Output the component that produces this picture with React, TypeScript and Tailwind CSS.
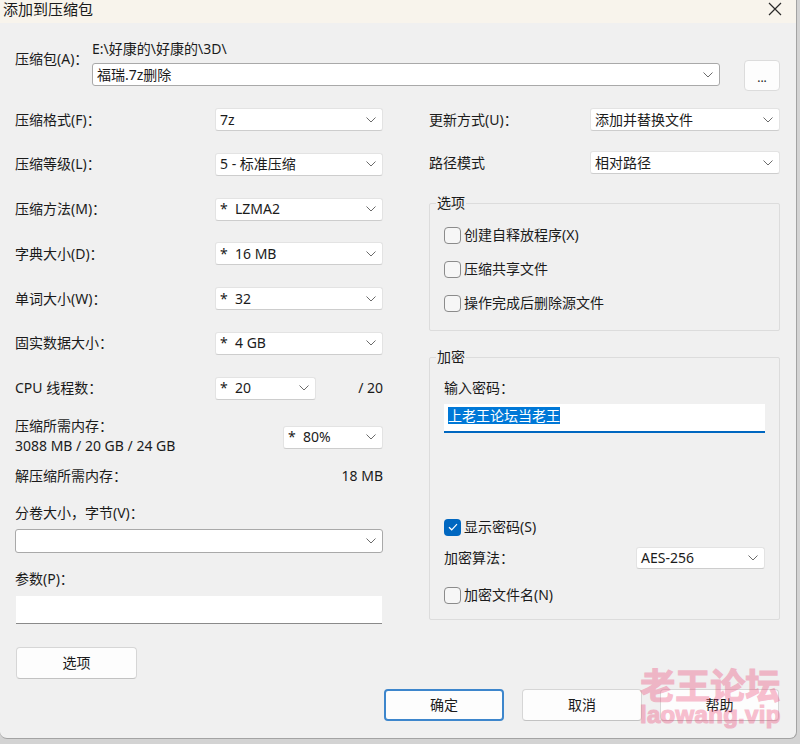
import * as React from 'react';

const FONT = '"Noto Sans", "Noto Sans CJK SC", sans-serif';

function Chevron() {
  return (
    <svg width="10" height="6" viewBox="0 0 10 6" className="mr-[6px] shrink-0">
      <polyline points="0.5,0.5 5,5 9.5,0.5" fill="none" stroke="#6b6b6b" strokeWidth="1" />
    </svg>
  );
}

function Combo({
  value,
  className = '',
  editable = false,
}: {
  value: string;
  className?: string;
  editable?: boolean;
}) {
  return (
    <div
      className={`flex items-center justify-between bg-white rounded-[3px] pl-[4px] text-[14px] leading-[20px] ${
        editable
          ? 'border border-[#a9a9a9]'
          : 'border border-[#e3e3e3] border-b-[#cdcdcd]'
      } ${className}`}
    >
      <span className="whitespace-pre">{value}</span>
      <Chevron />
    </div>
  );
}

function Check({ label, checked = false }: { label: string; checked?: boolean }) {
  return (
    <div className="flex items-center h-[20px]">
      {checked ? (
        <span className="w-[17px] h-[17px] rounded-[4px] bg-[#0067c0] flex items-center justify-center">
          <svg width="10" height="8" viewBox="0 0 10 8">
            <polyline points="1,4.2 3.7,6.8 9,1.2" fill="none" stroke="#fff" strokeWidth="1.2" />
          </svg>
        </span>
      ) : (
        <span className="w-[17px] h-[17px] rounded-[4px] border border-[#8b8b8b] bg-[#f6f6f6]" />
      )}
      <span className="ml-[3px] text-[14px]">{label}</span>
    </div>
  );
}

function Button({ label, primary = false, className = '' }: { label: string; primary?: boolean; className?: string }) {
  return (
    <button
      className={`h-[32px] rounded-[4px] bg-[#fdfdfd] text-[14px] text-[#1b1b1b] ${
        primary ? 'border-2 border-[#3d86cc]' : 'border border-[#d6d6d6] border-b-[#c2c2c2]'
      } ${className}`}
    >
      {label}
    </button>
  );
}

function Row({ label, children }: { label: string; children: React.ReactNode }) {
  return (
    <div className="flex items-center justify-between h-[23px]">
      <span className="text-[14px]">{label}</span>
      {children}
    </div>
  );
}

export default function App() {
  return (
    <div className="w-[800px] h-[744px] bg-[#d3d3d3] overflow-hidden" style={{ fontFamily: FONT }}>
      <div className="relative w-[797px] h-[739px] bg-[#f0f0f0] rounded-b-[7px] border-r border-b border-[#a3a3a3] text-[#1b1b1b]">
        {/* title bar */}
        <div className="h-[23px] bg-[#f8f4ec] flex items-center justify-between pl-[3px] pr-[14px]">
          <span className="text-[15px] leading-[18px] -mt-[5px]">添加到压缩包</span>
          <svg width="14" height="14" viewBox="0 0 14 14" className="-mt-[5px]">
            <path d="M1 1 L13 13 M13 1 L1 13" stroke="#2a2a2a" strokeWidth="1.2" />
          </svg>
        </div>

        {/* archive row */}
        <div className="flex pl-[15px] mt-[16px] text-[14px] leading-[20px]">
          <span className="w-[77px] mt-[10px]">压缩包(A)：</span>
          <div className="w-[628px] flex flex-col">
            <span>E:\好康的\好康的\3D\</span>
            <Combo value="福瑞.7z删除" editable className="mt-[4px] h-[23px]" />
          </div>
          <button className="ml-[24px] mt-[21px] w-[36px] h-[31px] rounded-[4px] bg-[#fdfdfd] border border-[#dcdcdc] text-[12px] leading-[20px] pt-[4px]">
            ...
          </button>
        </div>

        {/* two columns */}
        <div className="grid grid-cols-[368px_351px] gap-x-[46px] pl-[15px] mt-[17px] text-[14px] leading-[20px]">
          {/* left column */}
          <div className="flex flex-col">
            <div className="flex flex-col gap-[21.8px]">
              <Row label="压缩格式(F)：">
                <Combo value="7z" className="w-[168px] h-[23px]" />
              </Row>
              <Row label="压缩等级(L)：">
                <Combo value="5 - 标准压缩" className="w-[168px] h-[23px]" />
              </Row>
              <Row label="压缩方法(M)：">
                <Combo value="*  LZMA2" className="w-[168px] h-[23px]" />
              </Row>
              <Row label="字典大小(D)：">
                <Combo value="*  16 MB" className="w-[168px] h-[23px]" />
              </Row>
              <Row label="单词大小(W)：">
                <Combo value="*  32" className="w-[168px] h-[23px]" />
              </Row>
              <Row label="固实数据大小：">
                <Combo value="*  4 GB" className="w-[168px] h-[23px]" />
              </Row>
              <div className="flex items-center h-[23px]">
                <span className="w-[200px]">CPU 线程数：</span>
                <Combo value="*  20" className="w-[101px] h-[23px]" />
                <span className="ml-auto">/ 20</span>
              </div>
            </div>

            <div className="flex justify-between mt-[16px]">
              <div className="flex flex-col">
                <span>压缩所需内存：</span>
                <span>3088 MB / 20 GB / 24 GB</span>
              </div>
              <Combo value="*  80%" className="w-[100px] h-[23px] mt-[10px]" />
            </div>

            <div className="flex justify-between mt-[10px]">
              <span>解压缩所需内存：</span>
              <span>18 MB</span>
            </div>

            <span className="mt-[17px]">分卷大小，字节(V)：</span>
            <Combo value="" editable className="mt-[6px] h-[24px]" />

            <span className="mt-[16px]">参数(P)：</span>
            <div className="mt-[7px] ml-px w-[366px] h-[28px] bg-white border-b border-[#8a8a8a]" />

            <Button label="选项" className="mt-[23px] ml-px w-[121px]" />
          </div>

          {/* right column */}
          <div className="flex flex-col">
            <Row label="更新方式(U)：">
              <Combo value="添加并替换文件" className="w-[190px] h-[23px]" />
            </Row>
            <div className="mt-[20px]">
              <Row label="路径模式">
                <Combo value="相对路径" className="w-[190px] h-[23px]" />
              </Row>
            </div>

            <fieldset className="mt-[19px] border border-[#dcdcdc] rounded-[2px] pl-[14px] pr-[14px] pt-[12px] pb-[17px] flex flex-col gap-[14px]">
              <legend className="-ml-[8px] px-px leading-[20px]">选项</legend>
              <Check label="创建自释放程序(X)" />
              <Check label="压缩共享文件" />
              <Check label="操作完成后删除源文件" />
            </fieldset>

            <fieldset className="mt-[16px] border border-[#dcdcdc] rounded-[2px] pl-[14px] pr-[14px] pt-[11px] pb-[14px] flex flex-col">
              <legend className="-ml-[8px] px-px leading-[20px]">加密</legend>
              <span>输入密码：</span>
              <div className="mt-[6px] h-[29px] bg-white border-b-2 border-[#0067c0] pl-[4px] pt-[2px]">
                <span className="bg-[#0078d7] text-white leading-[17px] inline-block">上老王论坛当老王</span>
              </div>
              <div className="mt-[84px]">
                <Check label="显示密码(S)" checked />
              </div>
              <div className="flex items-center justify-between h-[22px] mt-[10px]">
                <span>加密算法：</span>
                <Combo value="AES-256" className="w-[129px] h-[22px]" />
              </div>
              <div className="mt-[16px]">
                <Check label="加密文件名(N)" />
              </div>
            </fieldset>
          </div>
        </div>

        {/* dialog buttons */}
        <div className="flex justify-end gap-[18px] pr-[17px] mt-[10px]">
          <Button label="确定" primary className="w-[120px]" />
          <Button label="取消" className="w-[120px]" />
          <Button label="帮助" className="w-[119px]" />
        </div>

        {/* watermark */}
        <div className="absolute left-[640px] top-[662px] pointer-events-none flex flex-col items-center opacity-35 text-[#ec4a78] [-webkit-text-stroke:1.2px_#ec4a78]">
          <span className="text-[35px] font-bold leading-[44px]" style={{ fontFamily: '"Noto Sans CJK SC", sans-serif' }}>
            老王论坛
          </span>
          <span className="text-[24px] font-bold leading-[26px] -mt-[4px] tracking-[0.3px]" style={{ fontFamily: '"Liberation Sans", Arial, sans-serif' }}>
            laowang.vip
          </span>
        </div>
      </div>
    </div>
  );
}
